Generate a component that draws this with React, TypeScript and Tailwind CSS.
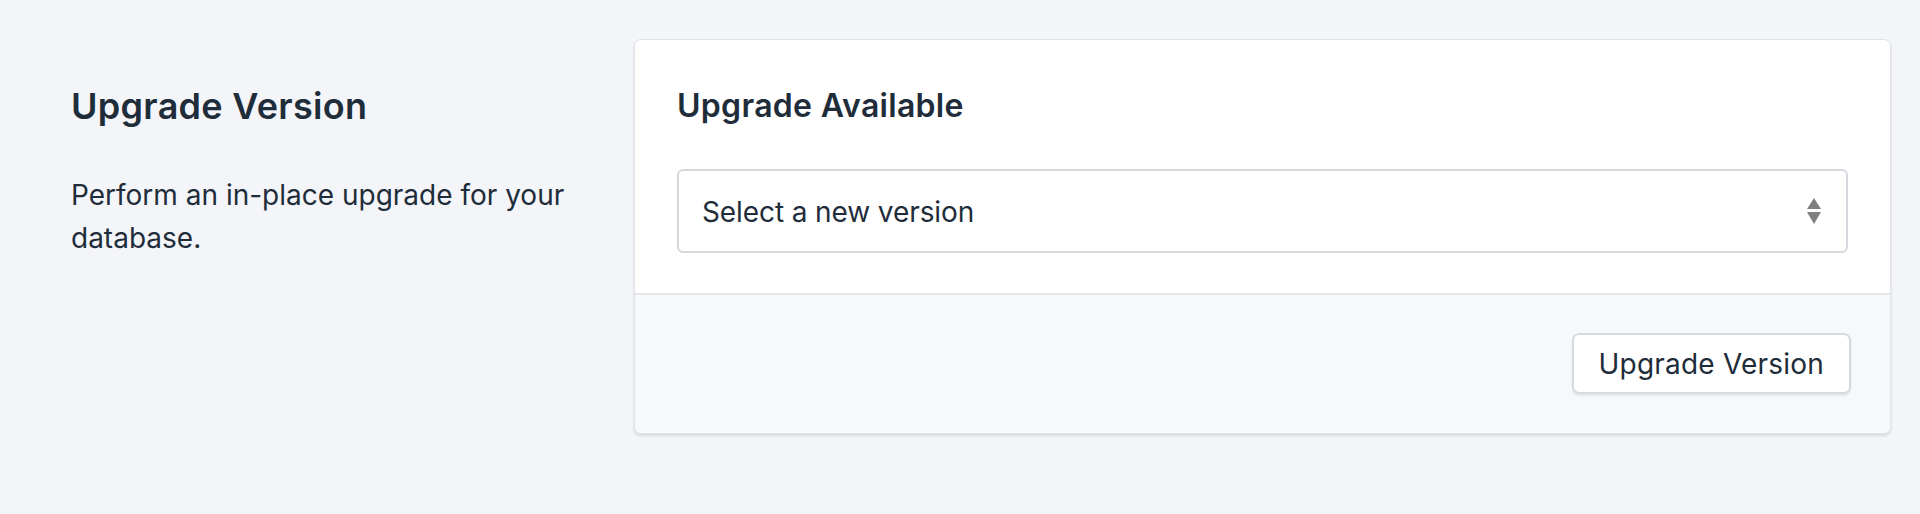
import { useState } from "react";

const versions = ["Select a new version", "PostgreSQL 13", "PostgreSQL 14", "PostgreSQL 15"];

function Arrows() {
  return (
    <svg width="14" height="26" viewBox="0 0 14 26" className="shrink-0">
      <polygon points="7,0 14,11 0,11" fill="#7f7f7f" />
      <polygon points="0,14 14,14 7,26" fill="#7f7f7f" />
    </svg>
  );
}

export default function App() {
  const [version] = useState(versions[0]);

  return (
    <div className="min-h-[514px] w-full bg-[#f4f5f9] pl-[71px] pr-[29px] pt-[39px] text-[#1f2d3a] [font-family:Inter,'Noto_Sans',sans-serif]">
      <div className="flex gap-[40px]">
        {/* ANNOTATION */}
        <div className="w-[523px] shrink-0 pt-[45px]">
          <h2 className="text-[36px] leading-[44px] font-semibold tracking-[0.3px]">Upgrade Version</h2>
          <p className="mt-[46px] text-[28px] leading-[43px] pr-[10px]">
            Perform an in-place upgrade for your database.
          </p>
        </div>

        {/* CARD */}
        <div className="flex-1 rounded-[7px] border border-[#dfe2e6] bg-white shadow-[0_2px_3px_rgba(63,63,68,0.15)] overflow-hidden">
          <div className="px-[42px] pt-[46px] pb-[40px]">
            <h3 className="text-[32px] leading-[40px] font-semibold tracking-[0.3px]">Upgrade Available</h3>
            <div className="mt-[43px] flex h-[84px] items-center justify-between rounded-[6px] border-2 border-[#d5d9de] bg-white pl-[23px] pr-[25px]">
              <span className="text-[28px] leading-[36px] tracking-[-0.1px] translate-y-[1px]">{version}</span>
              <Arrows />
            </div>
          </div>
          <div className="flex justify-end border-t-2 border-[#e3e6ea] bg-[#f6f8f9] pt-[38px] pb-[39px] pr-[39px]">
            <button className="flex h-[61px] items-center rounded-[7px] border-2 border-[#d6dadf] bg-white px-[25px] text-[28px] leading-[36px] tracking-[0.2px] text-[#1f2d3a] shadow-[0_2px_2px_rgba(22,29,37,0.08)]">
              Upgrade Version
            </button>
          </div>
        </div>
      </div>
    </div>
  );
}
